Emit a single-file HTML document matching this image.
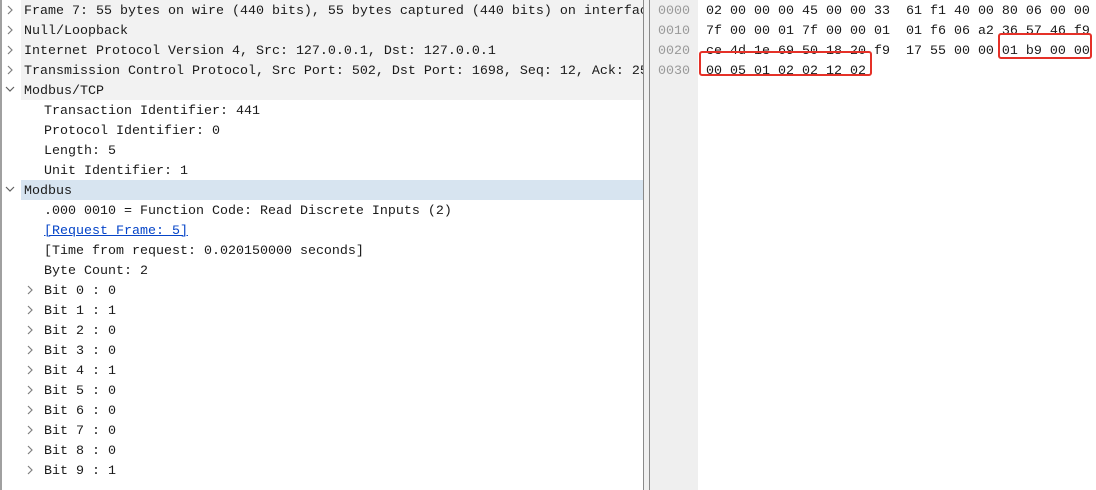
<!DOCTYPE html>
<html><head><style>
*{margin:0;padding:0;box-sizing:border-box}
body{width:1096px;height:490px;background:#fff;position:relative;overflow:hidden;font-family:"Liberation Mono",monospace;font-size:13.33px;color:#1a1a1a}
.lb{position:absolute;left:0;top:0;width:2px;height:490px;background:#a0a0a0}
.row{position:absolute;left:21px;width:622px;height:20px;line-height:20px;white-space:pre;overflow:hidden}
.g{background:#f2f2f2}
.sel{background:#d7e4f0}
svg.ar{position:absolute;width:10px;height:10px}
.t{position:absolute;white-space:pre;line-height:20px;height:20px;margin-top:2px}
a{color:#0645c8;text-decoration:underline}
.d1{position:absolute;left:643px;top:0;width:1px;height:490px;background:#8a8a8a}
.d2{position:absolute;left:644px;top:0;width:5px;height:490px;background:#f0f0f0}
.d3{position:absolute;left:649px;top:0;width:1px;height:490px;background:#8a8a8a}
.off{position:absolute;left:650px;top:0;width:48px;height:490px;background:#efefef}
.o{position:absolute;left:658px;color:#999;line-height:20px;white-space:pre;margin-top:2px}
.h{position:absolute;left:706px;line-height:20px;white-space:pre;margin-top:2px}
.box{position:absolute;border:2px solid #e53128;border-radius:3px}
</style></head><body>
<svg width="0" height="0" style="position:absolute"><defs>
<symbol id="r" viewBox="0 0 10 10"><path d="M3 1 L7 5 L3 9" fill="none" stroke="#808080" stroke-width="1.2"/></symbol>
<symbol id="d" viewBox="0 0 10 10"><path d="M1 3 L5 7 L9 3" fill="none" stroke="#606060" stroke-width="1.2"/></symbol>
</defs></svg>
<div class="lb"></div>
<div class="row g" style="top:0"><span class="t" style="left:3px">Frame 7: 55 bytes on wire (440 bits), 55 bytes captured (440 bits) on interface</span></div>
<div class="row g" style="top:20px"><span class="t" style="left:3px">Null/Loopback</span></div>
<div class="row g" style="top:40px"><span class="t" style="left:3px">Internet Protocol Version 4, Src: 127.0.0.1, Dst: 127.0.0.1</span></div>
<div class="row g" style="top:60px"><span class="t" style="left:3px">Transmission Control Protocol, Src Port: 502, Dst Port: 1698, Seq: 12, Ack: 25</span></div>
<div class="row g" style="top:80px"><span class="t" style="left:3px">Modbus/TCP</span></div>
<div class="row sel" style="top:180px"><span class="t" style="left:3px">Modbus</span></div>
<svg class="ar" style="left:5px;top:5px"><use href="#r"/></svg>
<svg class="ar" style="left:5px;top:25px"><use href="#r"/></svg>
<svg class="ar" style="left:5px;top:45px"><use href="#r"/></svg>
<svg class="ar" style="left:5px;top:65px"><use href="#r"/></svg>
<svg class="ar" style="left:5px;top:84px"><use href="#d"/></svg>
<svg class="ar" style="left:5px;top:184px"><use href="#d"/></svg>
<span class="t" style="left:44px;top:100px">Transaction Identifier: 441</span>
<span class="t" style="left:44px;top:120px">Protocol Identifier: 0</span>
<span class="t" style="left:44px;top:140px">Length: 5</span>
<span class="t" style="left:44px;top:160px">Unit Identifier: 1</span>
<span class="t" style="left:44px;top:200px">.000 0010 = Function Code: Read Discrete Inputs (2)</span>
<span class="t" style="left:44px;top:220px"><a>[Request Frame: 5]</a></span>
<span class="t" style="left:44px;top:240px">[Time from request: 0.020150000 seconds]</span>
<span class="t" style="left:44px;top:260px">Byte Count: 2</span>
<svg class="ar" style="left:25px;top:285px"><use href="#r"/></svg><span class="t" style="left:44px;top:280px">Bit 0 : 0</span>
<svg class="ar" style="left:25px;top:305px"><use href="#r"/></svg><span class="t" style="left:44px;top:300px">Bit 1 : 1</span>
<svg class="ar" style="left:25px;top:325px"><use href="#r"/></svg><span class="t" style="left:44px;top:320px">Bit 2 : 0</span>
<svg class="ar" style="left:25px;top:345px"><use href="#r"/></svg><span class="t" style="left:44px;top:340px">Bit 3 : 0</span>
<svg class="ar" style="left:25px;top:365px"><use href="#r"/></svg><span class="t" style="left:44px;top:360px">Bit 4 : 1</span>
<svg class="ar" style="left:25px;top:385px"><use href="#r"/></svg><span class="t" style="left:44px;top:380px">Bit 5 : 0</span>
<svg class="ar" style="left:25px;top:405px"><use href="#r"/></svg><span class="t" style="left:44px;top:400px">Bit 6 : 0</span>
<svg class="ar" style="left:25px;top:425px"><use href="#r"/></svg><span class="t" style="left:44px;top:420px">Bit 7 : 0</span>
<svg class="ar" style="left:25px;top:445px"><use href="#r"/></svg><span class="t" style="left:44px;top:440px">Bit 8 : 0</span>
<svg class="ar" style="left:25px;top:465px"><use href="#r"/></svg><span class="t" style="left:44px;top:460px">Bit 9 : 1</span>
<div class="d1"></div><div class="d2"></div><div class="d3"></div>
<div class="off"></div>
<div class="o" style="top:0">0000</div>
<div class="o" style="top:20px">0010</div>
<div class="o" style="top:40px">0020</div>
<div class="o" style="top:60px">0030</div>
<div class="h" style="top:0">02 00 00 00 45 00 00 33  61 f1 40 00 80 06 00 00</div>
<div class="h" style="top:20px">7f 00 00 01 7f 00 00 01  01 f6 06 a2 36 57 46 f9</div>
<div class="h" style="top:40px">ce 4d 1e 69 50 18 20 f9  17 55 00 00 01 b9 00 00</div>
<div class="h" style="top:60px">00 05 01 02 02 12 02</div>
<div class="box" style="left:998px;top:33px;width:94px;height:26px"></div>
<div class="box" style="left:699px;top:51px;width:173px;height:25px"></div>
</body></html>
